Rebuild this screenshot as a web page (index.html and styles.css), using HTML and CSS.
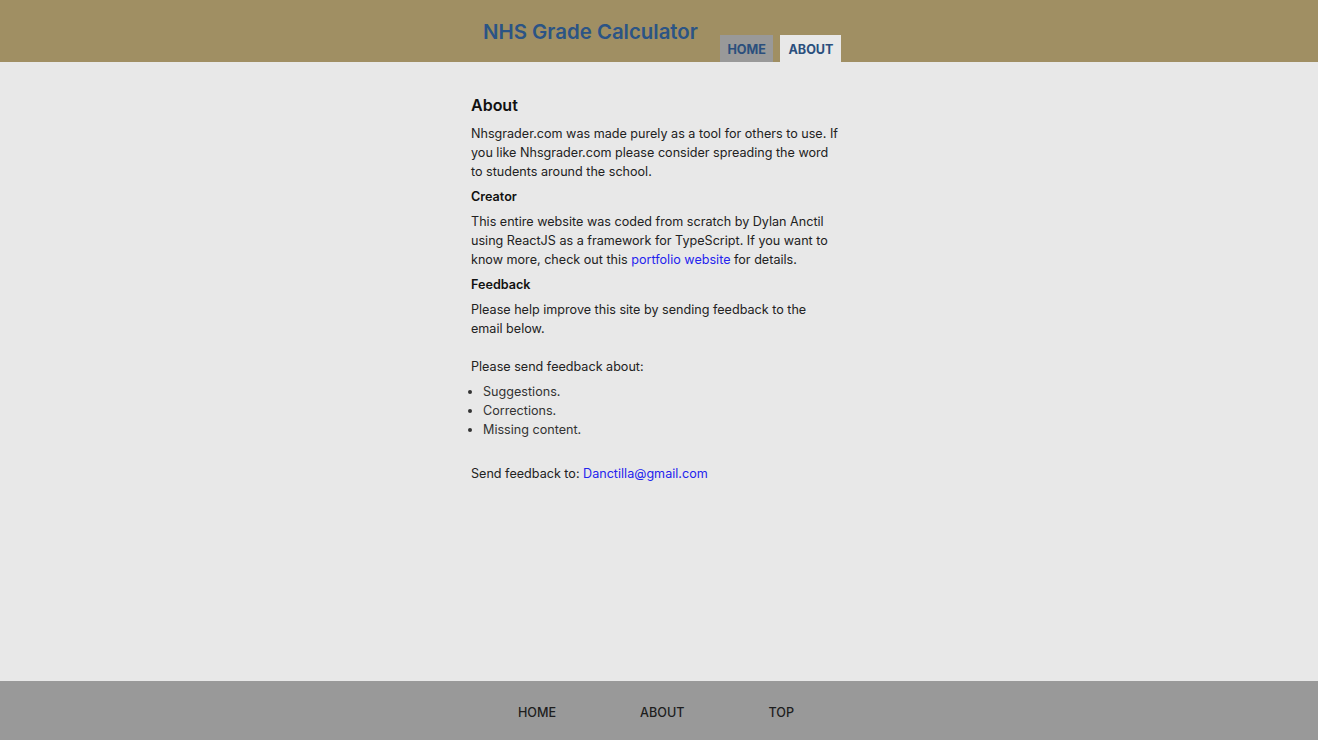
FILE: index.html
```html
<!DOCTYPE html>
<html lang="en">
<head>
<meta charset="utf-8">
<title>NHS Grade Calculator</title>
<link rel="stylesheet" href="styles.css">
</head>
<body>
<div class="page">
  <header class="site-header">
    <div class="header-inner">
      <h1 class="site-title">NHS Grade Calculator</h1>
      <nav class="tabs">
        <a class="tab" href="#">HOME</a>
        <a class="tab tab-active" href="#">ABOUT</a>
      </nav>
    </div>
  </header>
  <main class="main">
    <div class="content">
      <h2 class="title">About</h2>
      <p class="text">Nhsgrader.com was made purely as a tool for others to use. If you like Nhsgrader.com please consider spreading the word to students around the school.</p>
      <h3 class="subtitle">Creator</h3>
      <p class="text">This entire website was coded from scratch by Dylan Anctil using ReactJS as a framework for TypeScript. If you want to know more, check out this <a class="link" href="#">portfolio website</a> for details.</p>
      <h3 class="subtitle">Feedback</h3>
      <p class="text">Please help improve this site by sending feedback to the email below.</p>
      <p class="text text-gap">Please send feedback about:</p>
      <ul class="list">
        <li>Suggestions.</li>
        <li>Corrections.</li>
        <li>Missing content.</li>
      </ul>
      <p class="text text-spaced">Send feedback to: <a class="link" href="#">Danctilla@gmail.com</a></p>
    </div>
  </main>
  <footer class="site-footer">
    <a class="foot-link" href="#">HOME</a>
    <a class="foot-link" href="#">ABOUT</a>
    <a class="foot-link" href="#">TOP</a>
  </footer>
</div>
</body>
</html>
```

FILE: styles.css
```css
* { box-sizing: border-box; }
html, body { margin: 0; padding: 0; }
body {
  font-family: Inter, "Noto Sans", "Liberation Sans", sans-serif;
  background: #e8e8e8;
  color: #222;
}
.page {
  min-height: 100vh;
  display: flex;
  flex-direction: column;
}
.site-header {
  background: #a08f63;
  height: 62px;
}
.header-inner {
  width: 376px;
  margin: 0 auto;
  padding-left: 12px;
  height: 100%;
  display: flex;
  align-items: flex-end;
  gap: 22px;
}
.site-title {
  margin: 0;
  align-self: center;
  font-size: 20.4px;
  font-weight: 600;
  color: #2b5485;
  line-height: 24px;
  padding-top: 1px;
}
.tabs {
  display: flex;
  gap: 7px;
}
.tab {
  display: block;
  height: 27px;
  line-height: 29px;
  padding: 0 7.5px;
  font-size: 12.6px;
  font-weight: 700;
  color: #2b4f7d;
  text-decoration: none;
  background: #999999;
}
.tab-active {
  background: #e8e8e8;
  padding: 0 8px;
}
.main {
  flex: 1;
}
.content {
  width: 376px;
  margin: 0 auto;
  padding-top: 33px;
  padding-right: 6px;
}
.title {
  margin: 0 0 9px;
  font-size: 16px;
  font-weight: 600;
  line-height: 20px;
  color: #111;
}
.subtitle {
  margin: 6px 0;
  font-size: 12.6px;
  font-weight: 600;
  line-height: 19px;
  color: #111;
}
.text {
  margin: 6px 0;
  font-size: 12.6px;
  line-height: 19px;
}
.text-gap {
  margin-top: 19px;
}
.text-spaced {
  margin-top: 25px;
}
.list {
  margin: 6px 0;
  padding-left: 12px;
  font-size: 12.6px;
  line-height: 19px;
  color: #333;
}
.link {
  color: #2424ee;
  text-decoration: none;
}
.site-footer {
  height: 59px;
  padding-top: 4px;
  padding-right: 6px;
  background: #999999;
  display: flex;
  justify-content: center;
  align-items: center;
  gap: 84px;
}
.foot-link {
  font-size: 12.6px;
  font-weight: 500;
  color: #1e1e1e;
  text-decoration: none;
}
```
